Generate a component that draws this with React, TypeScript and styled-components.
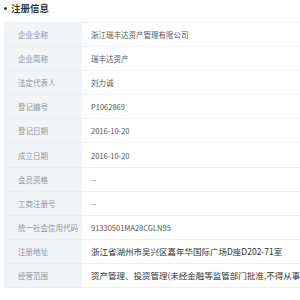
import React from 'react'
import styled, { createGlobalStyle } from 'styled-components'

const GlobalStyle = createGlobalStyle`
  html, body {
    margin: 0;
    padding: 0;
    background: #fff;
    overflow: hidden;
  }
  body {
    font-family: "Noto Sans CJK SC", "Noto Sans", sans-serif;
  }
`

const Page = styled.div`
  width: 330px;
  padding: 2px 0 0 4px;
`

const Title = styled.h3`
  display: flex;
  align-items: center;
  gap: 4px;
  margin: 0 0 7px;
  height: 13px;
  font-size: 9.5px;
  font-weight: 700;
  color: #333;
  line-height: 13px;

  &::before {
    content: '';
    width: 3px;
    height: 3px;
    border-radius: 50%;
    background: #333;
  }
`

const Table = styled.div`
  display: grid;
  grid-template-columns: 78px 1fr;
  border-top: 1px solid #eceef1;
  box-shadow: 0 1px 1px rgba(0, 0, 0, 0.04);
`

const Label = styled.div`
  display: flex;
  align-items: center;
  height: 23.1px;
  padding-left: 14px;
  background: #f2f5f8;
  border-bottom: 1px solid #eceef1;
  font-size: 7.5px;
  color: #8f949b;
  white-space: nowrap;
`

const Value = styled.div<{ $large?: boolean }>`
  display: flex;
  align-items: center;
  height: 23.1px;
  padding-left: 9px;
  border-bottom: 1px solid #eceef1;
  font-size: ${(p) => (p.$large ? '8.5px' : '7.5px')};
  color: ${(p) => (p.$large ? '#333' : '#555')};
  white-space: nowrap;
  overflow: hidden;
`

const rows: { label: string; value: string; large?: boolean }[] = [
  { label: '企业全称', value: '浙江瑞丰达资产管理有限公司' },
  { label: '企业简称', value: '瑞丰达资产' },
  { label: '法定代表人', value: '刘力诚' },
  { label: '登记编号', value: 'P1062869' },
  { label: '登记日期', value: '2016-10-20' },
  { label: '成立日期', value: '2016-10-20' },
  { label: '会员资格', value: '--' },
  { label: '工商注册号', value: '--' },
  { label: '统一社会信用代码', value: '91330501MA28CGLN95' },
  { label: '注册地址', value: '浙江省湖州市吴兴区嘉年华国际广场D座D202-71室', large: true },
  { label: '经营范围', value: '资产管理、投资管理(未经金融等监管部门批准,不得从事', large: true },
]

const App: React.FC = () => {
  return (
    <Page>
      <GlobalStyle />
      <Title>注册信息</Title>
      <Table>
        {rows.map((row) => (
          <React.Fragment key={row.label}>
            <Label>{row.label}</Label>
            <Value $large={row.large}>{row.value}</Value>
          </React.Fragment>
        ))}
      </Table>
    </Page>
  )
}

export default App
